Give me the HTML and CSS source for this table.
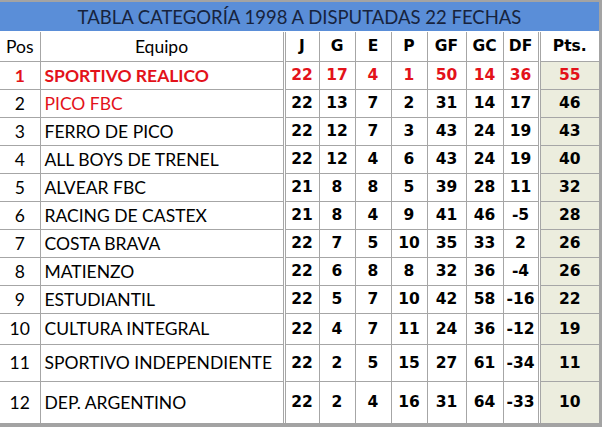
FILE: index.html
```html
<!DOCTYPE html>
<html lang="es">
<head>
<meta charset="utf-8">
<title>Tabla Categoría 1998</title>
<link rel="stylesheet" href="styles.css">
</head>
<body>
<div class="frame">
  <div class="title">TABLA CATEGORÍA 1998 A DISPUTADAS 22 FECHAS</div>
  <table class="standings">
    <colgroup>
      <col class="c-pos"><col class="c-team"><col class="c-j"><col class="c-g"><col class="c-e"><col class="c-p"><col class="c-gf"><col class="c-gc"><col class="c-df"><col class="c-pts">
    </colgroup>
    <thead>
      <tr class="head">
        <th class="pos">Pos</th><th class="team-h">Equipo</th><th class="num sep">J</th><th class="num">G</th><th class="num">E</th><th class="num">P</th><th class="num">GF</th><th class="num">GC</th><th class="num">DF</th><th class="num sep">Pts.</th>
      </tr>
    </thead>
    <tbody>
      <tr class="r first"><td class="pos">1</td><td class="team">SPORTIVO REALICO</td><td class="num sep">22</td><td class="num">17</td><td class="num">4</td><td class="num">1</td><td class="num">50</td><td class="num">14</td><td class="num">36</td><td class="num pts sep">55</td></tr>
      <tr class="r"><td class="pos">2</td><td class="team red">PICO FBC</td><td class="num sep">22</td><td class="num">13</td><td class="num">7</td><td class="num">2</td><td class="num">31</td><td class="num">14</td><td class="num">17</td><td class="num pts sep">46</td></tr>
      <tr class="r"><td class="pos">3</td><td class="team">FERRO DE PICO</td><td class="num sep">22</td><td class="num">12</td><td class="num">7</td><td class="num">3</td><td class="num">43</td><td class="num">24</td><td class="num">19</td><td class="num pts sep">43</td></tr>
      <tr class="r"><td class="pos">4</td><td class="team">ALL BOYS DE TRENEL</td><td class="num sep">22</td><td class="num">12</td><td class="num">4</td><td class="num">6</td><td class="num">43</td><td class="num">24</td><td class="num">19</td><td class="num pts sep">40</td></tr>
      <tr class="r"><td class="pos">5</td><td class="team">ALVEAR FBC</td><td class="num sep">21</td><td class="num">8</td><td class="num">8</td><td class="num">5</td><td class="num">39</td><td class="num">28</td><td class="num">11</td><td class="num pts sep">32</td></tr>
      <tr class="r"><td class="pos">6</td><td class="team">RACING DE CASTEX</td><td class="num sep">21</td><td class="num">8</td><td class="num">4</td><td class="num">9</td><td class="num">41</td><td class="num">46</td><td class="num">-5</td><td class="num pts sep">28</td></tr>
      <tr class="r"><td class="pos">7</td><td class="team">COSTA BRAVA</td><td class="num sep">22</td><td class="num">7</td><td class="num">5</td><td class="num">10</td><td class="num">35</td><td class="num">33</td><td class="num">2</td><td class="num pts sep">26</td></tr>
      <tr class="r"><td class="pos">8</td><td class="team">MATIENZO</td><td class="num sep">22</td><td class="num">6</td><td class="num">8</td><td class="num">8</td><td class="num">32</td><td class="num">36</td><td class="num">-4</td><td class="num pts sep">26</td></tr>
      <tr class="r"><td class="pos">9</td><td class="team">ESTUDIANTIL</td><td class="num sep">22</td><td class="num">5</td><td class="num">7</td><td class="num">10</td><td class="num">42</td><td class="num">58</td><td class="num">-16</td><td class="num pts sep">22</td></tr>
      <tr class="r r10"><td class="pos">10</td><td class="team">CULTURA INTEGRAL</td><td class="num sep">22</td><td class="num">4</td><td class="num">7</td><td class="num">11</td><td class="num">24</td><td class="num">36</td><td class="num">-12</td><td class="num pts sep">19</td></tr>
      <tr class="r r11"><td class="pos">11</td><td class="team">SPORTIVO INDEPENDIENTE</td><td class="num sep">22</td><td class="num">2</td><td class="num">5</td><td class="num">15</td><td class="num">27</td><td class="num">61</td><td class="num">-34</td><td class="num pts sep">11</td></tr>
      <tr class="r r12"><td class="pos">12</td><td class="team">DEP. ARGENTINO</td><td class="num sep">22</td><td class="num">2</td><td class="num">4</td><td class="num">16</td><td class="num">31</td><td class="num">64</td><td class="num">-33</td><td class="num pts sep">10</td></tr>
    </tbody>
  </table>
</div>
</body>
</html>
```
FILE: styles.css
```css
html, body {
  margin: 0;
  padding: 0;
  background: #ffffff;
}

.frame {
  width: 599px;
  border-top: 2px solid #a3a3a3;
  border-right: 3px solid #a3a3a3;
  border-bottom: 4px solid #a3a3a3;
  font-family: "Lato", "Open Sans", sans-serif;
  color: #000000;
}

.title {
  height: 29px;
  line-height: 30px;
  background: #5a8ed8;
  color: #17233d;
  text-align: center;
  font-size: 18.5px;
  border-bottom: 1px solid #ffffff;
}

.standings {
  width: 599px;
  border-collapse: collapse;
  table-layout: fixed;
}

.c-pos { width: 40px; }
.c-team { width: 244px; }
.c-j { width: 35px; }
.c-g { width: 36px; }
.c-e { width: 36px; }
.c-p { width: 36px; }
.c-gf { width: 39px; }
.c-gc { width: 37px; }
.c-df { width: 36px; }
.c-pts { width: 60px; }

.standings th,
.standings td {
  border: 1px solid #a6a6a6;
  padding: 0;
  white-space: nowrap;
  overflow: hidden;
}

.standings tr:first-child th { border-top: none; }
.standings tr:last-child td { border-bottom: none; }
.standings th:first-child,
.standings td:first-child { border-left: none; }
.standings th:last-child,
.standings td:last-child { border-right: none; }

.head { height: 29px; }
.r { height: 28px; }
.r10 { height: 31px; }
.r11 { height: 37px; }
.r12 { height: 42px; }

.head th {
  font-weight: normal;
  font-size: 17.5px;
}

.pos {
  text-align: center;
  font-size: 17.5px;
}

.team-h { text-align: center; }

.team {
  text-align: left;
  padding-left: 4px !important;
  font-size: 17.5px;
}

.num {
  text-align: center;
  font-family: "DejaVu Sans", "Verdana", sans-serif;
  font-weight: bold;
  font-size: 15.5px;
}

.head th.num {
  font-family: "DejaVu Sans", "Verdana", sans-serif;
  font-weight: bold;
  font-size: 15.5px;
}

.sep { border-left: 3px double #a6a6a6 !important; }

.pts { background: #ecedde; }

.first td { color: #e3121a; }
.first .pos,
.first .team { font-weight: bold; }

.red { color: #e3121a; }
```
